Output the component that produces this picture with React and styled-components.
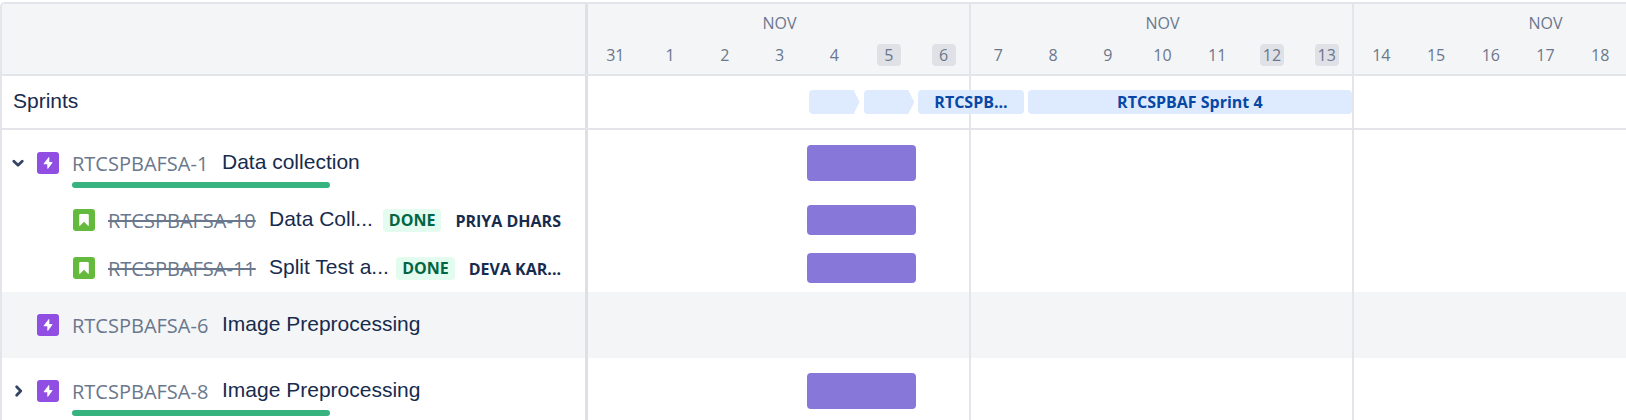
import React from "react";
import styled, { createGlobalStyle, css } from "styled-components";

const color = {
  line: "#E4E5EA",
  divider: "#DFE0E6",
  panel: "#F4F5F7",
  text: "#172B4D",
  subtle: "#6B778C",
  weekend: "#DFE1E6",
  sprint: "#DEEBFF",
  sprintText: "#0747A6",
  bar: "#8777D9",
  epic: "#904EE2",
  story: "#63BA3C",
  progress: "#36B37E",
};

const ui = `"Open Sans", "Noto Sans", sans-serif`;
const WEEK = 383;

const GlobalStyle = createGlobalStyle`
  * { box-sizing: border-box; }
  body {
    margin: 0;
    background: #fff;
    color: ${color.text};
    font-family: ${ui};
  }
`;

const Page = styled.main`
  height: 100vh;
  padding-top: 2px;
  overflow: hidden;
`;

const Roadmap = styled.div`
  border-top: 2px solid ${color.line};
  border-left: 2px solid ${color.line};
  border-top-left-radius: 5px;
  overflow: hidden;
`;

const Row = styled.div`
  display: flex;
  min-height: ${(p) => p.$height}px;
  background: ${(p) => (p.$shaded ? color.panel : "transparent")};
  ${(p) => p.$ruled && css`border-bottom: 2px solid ${color.line};`}
`;

const Side = styled.div`
  flex: 0 0 586px;
  display: flex;
  flex-direction: column;
  justify-content: ${(p) => (p.$center ? "center" : "flex-start")};
  padding: ${(p) => p.$top || 0}px 24px 0 10px;
  border-right: 3px solid ${color.divider};
`;

const Lane = styled.div`
  flex: 1 1 0;
  min-width: 0;
  overflow: hidden;
  background: repeating-linear-gradient(
    to right,
    transparent 0 ${WEEK - 2}px,
    ${color.line} ${WEEK - 2}px ${WEEK}px
  );
`;

const Days = styled.div`
  display: grid;
  grid-template-columns: repeat(21, 1fr);
  width: ${WEEK * 3}px;
  height: 100%;
  align-items: center;
`;

const HeaderGrid = styled(Days)`
  grid-template-rows: 38px 24px;
  align-content: start;
`;

const Month = styled.div`
  grid-column: span 7;
  grid-row: 1;
  text-align: center;
  font-size: 16px;
  line-height: 38px;
  color: ${color.subtle};
`;

const Day = styled.div`
  grid-row: 2;
  justify-self: center;
  align-self: end;
  width: 24px;
  border-radius: 4px;
  text-align: center;
  font-size: 16px;
  line-height: 22px;
  color: ${color.subtle};
  background: ${(p) => (p.$weekend ? color.weekend : "transparent")};
`;

const Sprint = styled.div`
  grid-column: ${(p) => p.$start} / span ${(p) => p.$span};
  height: 24px;
  margin: 0 2px;
  padding: 0 8px;
  border-radius: 4px;
  background: ${color.sprint};
  color: ${color.sprintText};
  font-size: 16px;
  font-weight: 700;
  line-height: 24px;
  text-align: center;
  white-space: nowrap;
  overflow: hidden;
  ${(p) =>
    p.$arrow &&
    css`
      border-radius: 4px 0 0 4px;
      clip-path: polygon(0 0, calc(100% - 6px) 0, 100% 50%, calc(100% - 6px) 100%, 0 100%);
    `}
`;

const Bar = styled.div`
  grid-column: ${(p) => p.$start} / span ${(p) => p.$span};
  height: ${(p) => (p.$child ? 30 : 36)}px;
  border-radius: 4px;
  background: ${color.bar};
`;

const SideTitle = styled.div`
  padding: 0 0 2px 1px;
  font-family: "Liberation Sans", Arial, sans-serif;
  font-size: 21px;
  line-height: 24px;
`;

const Line = styled.div`
  display: flex;
  align-items: center;
  height: 36px;
  padding-left: ${(p) => (p.$child ? 61 : 0)}px;
  white-space: nowrap;
`;

const Toggle = styled.button`
  display: flex;
  width: 13px;
  height: 24px;
  margin-right: 12px;
  padding: 0;
  align-items: center;
  justify-content: center;
  border: 0;
  background: none;
  color: #344563;
`;

const ToggleSpace = styled.span`
  width: 25px;
`;

const TypeIcon = styled.svg`
  flex: none;
  width: 22px;
  height: 22px;
`;

const Key = styled.a`
  width: ${(p) => (p.$child ? 149 : 138)}px;
  margin: 0 12px 0 13px;
  padding-top: 2px;
  color: ${color.subtle};
  font-size: 20px;
  line-height: 28px;
  text-decoration: ${(p) => (p.$done ? "line-through" : "none")};
`;

const Summary = styled.span`
  font-family: "Liberation Sans", Arial, sans-serif;
  font-size: 21px;
  line-height: 24px;
  padding-bottom: 2px;
`;

const Meta = styled.span`
  display: flex;
  align-items: center;
  gap: 14px;
  margin-left: auto;
  font-size: 16px;
  font-weight: 700;
  line-height: 23px;
`;

const Status = styled.span`
  padding: 0 6px;
  border-radius: 4px;
  background: #e3fcef;
  color: #006644;
`;

const Assignee = styled.span`
  padding-top: 2px;
`;

const Progress = styled.div`
  width: 258px;
  height: 6px;
  margin: 1px 0 0 60px;
  border-radius: 3px;
  background: ${color.progress};
`;

function Chevron({ open }) {
  return (
    <svg width="14" height="14" viewBox="0 0 14 14" fill="none" stroke="currentColor" strokeWidth="3" strokeLinecap="round" strokeLinejoin="round" aria-hidden="true">
      <path d={open ? "M2 5.2 L6.5 9.5 L11 5.2" : "M5 2.5 L9.4 7 L5 11.5"} />
    </svg>
  );
}

function EpicIcon() {
  return (
    <TypeIcon viewBox="0 0 22 22" role="img" aria-label="Epic">
      <rect width="22" height="22" rx="3" fill={color.epic} />
      <path d="M11.6 5.3 L6.8 11.4 Q6.4 12.2 7.3 12.3 H10.3 V16.4 Q10.5 17.2 11.2 16.5 L15.4 10.8 Q15.8 10 14.9 9.9 H12.3 V5.7 Q12.2 4.8 11.6 5.3 Z" fill="#fff" />
    </TypeIcon>
  );
}

function StoryIcon() {
  return (
    <TypeIcon viewBox="0 0 22 22" role="img" aria-label="Story">
      <rect width="22" height="22" rx="3" fill={color.story} />
      <path d="M7.2 5 H14.8 Q15.8 5 15.8 6 V16.4 Q15.6 17.2 15 16.7 L11 12.8 L7 16.7 Q6.4 17.2 6.2 16.4 V6 Q6.2 5 7.2 5 Z" fill="#fff" />
    </TypeIcon>
  );
}

const days = [31, ...Array.from({ length: 18 }, (_, i) => i + 1)];
const weekends = [5, 6, 12, 13];

const sprints = [
  { start: 5, span: 1, arrow: true },
  { start: 6, span: 1, arrow: true },
  { start: 7, span: 2, label: "RTCSPB..." },
  { start: 9, span: 6, label: "RTCSPBAF Sprint 4" },
];

const issues = [
  { id: "RTCSPBAFSA-1", title: "Data collection", open: true, progress: true, bar: true },
  { id: "RTCSPBAFSA-10", title: "Data Coll...", child: true, assignee: "PRIYA DHARS", bar: true },
  { id: "RTCSPBAFSA-11", title: "Split Test a...", child: true, assignee: "DEVA KAR...", bar: true },
  { id: "RTCSPBAFSA-6", title: "Image Preprocessing", leaf: true, shaded: true },
  { id: "RTCSPBAFSA-8", title: "Image Preprocessing", progress: true, bar: true },
];

function IssueRow({ issue }) {
  const { id, title, child, open, leaf, shaded, progress, bar, assignee } = issue;
  return (
    <Row $height={child ? 48 : 66} $shaded={shaded}>
      <Side $top={child ? 6 : 15}>
        <Line $child={child}>
          {!child && !leaf && (
            <Toggle type="button" aria-expanded={!!open} aria-label={`Toggle ${id}`}>
              <Chevron open={open} />
            </Toggle>
          )}
          {leaf && <ToggleSpace />}
          {child ? <StoryIcon /> : <EpicIcon />}
          <Key href={`#${id}`} $child={child} $done={child}>{id}</Key>
          <Summary>{title}</Summary>
          {assignee && (
            <Meta>
              <Status>DONE</Status>
              <Assignee>{assignee}</Assignee>
            </Meta>
          )}
        </Line>
        {progress && <Progress />}
      </Side>
      <Lane>
        <Days>{bar && <Bar $start={5} $span={2} $child={child} />}</Days>
      </Lane>
    </Row>
  );
}

export default function App() {
  return (
    <Page>
      <GlobalStyle />
      <Roadmap>
        <Row $height={72} $shaded $ruled>
          <Side />
          <Lane>
            <HeaderGrid>
              {[0, 1, 2].map((w) => <Month key={w}>NOV</Month>)}
              {days.map((d) => (
                <Day key={d} $weekend={weekends.includes(d)}>{d}</Day>
              ))}
            </HeaderGrid>
          </Lane>
        </Row>
        <Row $height={54} $ruled>
          <Side $center><SideTitle>Sprints</SideTitle></Side>
          <Lane>
            <Days>
              {sprints.map((s) => (
                <Sprint key={s.start} $start={s.start} $span={s.span} $arrow={s.arrow}>{s.label}</Sprint>
              ))}
            </Days>
          </Lane>
        </Row>
        {issues.map((issue) => <IssueRow key={issue.id} issue={issue} />)}
      </Roadmap>
    </Page>
  );
}
